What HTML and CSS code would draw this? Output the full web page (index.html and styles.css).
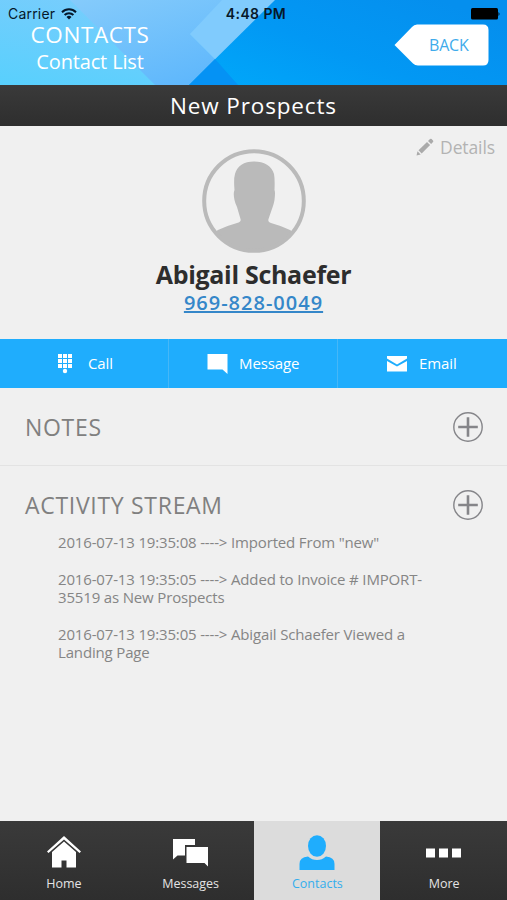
FILE: index.html
```html
<!DOCTYPE html>
<html lang="en">
<head>
    <meta charset="UTF-8">
    <meta name="viewport" content="width=device-width, initial-scale=1.0">
    <title>Contacts</title>
    <link rel="stylesheet" href="styles.css">
</head>
<body>

    <header class="header">
        <svg class="header-bg" viewBox="0 0 507 85" preserveAspectRatio="none">
            <defs>
                <linearGradient id="light" x1="0" y1="1" x2="1" y2="0">
                    <stop offset="0" stop-color="#58d0fd"/>
                    <stop offset="1" stop-color="#8ccbfc"/>
                </linearGradient>
                <linearGradient id="band" x1="0" y1="0" x2="0.6" y2="1">
                    <stop offset="0" stop-color="#85cbfb"/>
                    <stop offset="1" stop-color="#60b8fc"/>
                </linearGradient>
                <linearGradient id="deep" x1="0" y1="1" x2="1" y2="0.3">
                    <stop offset="0" stop-color="#00a9fa"/>
                    <stop offset="0.5" stop-color="#0298f4"/>
                    <stop offset="1" stop-color="#058fee"/>
                </linearGradient>
            </defs>
            <rect width="507" height="85" fill="url(#light)"/>
            <polygon points="70,0 240,0 190,34 216,60 190,85 155,85" fill="url(#band)"/>
            <polygon points="222,0 275,0 216,60 190,34" fill="#80cbfd"/>
            <polygon points="275,0 507,0 507,85 189,85" fill="url(#deep)"/>
            <polygon points="189,85 215,59 238,85" fill="#0592f4"/>
        </svg>

        <div class="status-bar">
            <div class="carrier">
                Carrier
                <svg width="16" height="12" viewBox="0 0 16 12">
                    <g fill="none" stroke="#06182a" stroke-width="2">
                        <path d="M1 4.2a10 10 0 0 1 14 0"/>
                        <path d="M3.6 7a6.2 6.2 0 0 1 8.8 0"/>
                    </g>
                    <path d="M8 11.5 5.5 8.9a3.6 3.6 0 0 1 5 0z" fill="#06182a"/>
                </svg>
            </div>
            <div class="clock">4:48 PM</div>
            <svg class="battery" width="29" height="12" viewBox="0 0 29 12">
                <rect width="27" height="11.5" rx="1.5"/>
                <path d="M27.500 4q2 2 0 4z"/>
            </svg>
        </div>

        <div class="header-row">
            <div class="heading">
                <h1>CONTACTS</h1>
                <p>Contact List</p>
            </div>
            <a href="#" class="back">
                <svg width="95" height="42" viewBox="0 0 95 42">
                    <path d="M21 .5H89q5.500 0 5.500 5.500V36q0 5.500-5.500 5.500H24q-3 0-5-2L.5 21 18 3q2-2.500 5-2.500z" fill="#fff"/>
                </svg>
                <span>BACK</span>
            </a>
        </div>
    </header>

    <div class="title-bar">New Prospects</div>

    <section class="profile">
        <a href="#" class="details">
            <svg width="18" height="18" viewBox="0 0 18 18" fill="#aaa">
                <path d="M.5 17.500 1.500 13.300 4.700 16.500z"/>
                <path d="M2.500 12.200 11 3.900 14.100 7 5.700 15.400z"/>
                <path d="M12 2.900 14 1q.8-.6 1.600.1l1.400 1.400q.7.8 0 1.600L15.100 6z"/>
            </svg>
            Details
        </a>
        <svg class="avatar" width="104" height="104" viewBox="0 0 104 104">
            <clipPath id="circle"><circle cx="52" cy="52" r="51"/></clipPath>
            <g clip-path="url(#circle)" fill="#bababa">
                <path d="M52 12.500C62 12.500 70 17 72 25Q73 30 72.500 41Q73.500 43 72.500 51Q72 54 71 57L66.500 70Q65.500 73 69 74Q80 77 88 81L104 92V104H0V92L16 81Q24 77 35 74Q39.500 73 38.500 70L35 58Q33 54 32.500 51Q31 44 32.500 41Q31.500 30 33 25C35 17 42 12.500 52 12.500Z"/>
            </g>
            <circle cx="52" cy="52" r="49.800" fill="none" stroke="#bababa" stroke-width="4"/>
        </svg>
        <h2>Abigail Schaefer</h2>
        <a href="#" class="phone">969-828-0049</a>
    </section>

    <nav class="actions">
        <a href="#" class="call">
            <svg width="14" height="20" viewBox="0 0 14 20" fill="#fff">
                <path d="M0 0h4v4H0zM5 0h4v4H5zM10 0h4v4h-4zM0 5h4v4H0zM5 5h4v4H5zM10 5h4v4h-4zM0 10h4v4H0zM5 10h4v4H5zM10 10h4v4h-4z"/>
                <circle cx="7" cy="17" r="2.200"/>
            </svg>
            <span>Call</span>
        </a>
        <a href="#" class="message">
            <svg width="21" height="20" viewBox="0 0 21 20">
                <path d="M.5 0h20v20l-5-4.500H.5z" fill="#fff"/>
            </svg>
            <span>Message</span>
        </a>
        <a href="#" class="email">
            <svg width="20" height="16" viewBox="0 0 20 16" fill="#fff">
                <path d="M0 0h20v2.500L10 8.500 0 2.500z"/>
                <path d="M0 5l10 5.500L20 5v10.500H0z"/>
            </svg>
            <span>Email</span>
        </a>
    </nav>

    <section class="panel notes">
        <h3>NOTES</h3>
        <svg width="30" height="30" viewBox="0 0 30 30" fill="none" stroke="#858589">
            <circle cx="15" cy="15" r="14.200" stroke-width="1.400"/>
            <path d="M15 5.200v19.600M5.200 15h19.600" stroke-width="2.600"/>
        </svg>
    </section>

    <section class="activity">
        <div class="panel">
            <h3>ACTIVITY STREAM</h3>
            <svg width="30" height="30" viewBox="0 0 30 30" fill="none" stroke="#858589">
                <circle cx="15" cy="15" r="14.200" stroke-width="1.400"/>
                <path d="M15 5.200v19.600M5.200 15h19.600" stroke-width="2.600"/>
            </svg>
        </div>
        <ul>
            <li>2016-07-13 19:35:08 ----&gt; Imported From "new"</li>
            <li>2016-07-13 19:35:05 ----&gt; Added to Invoice # IMPORT-<br>35519 as New Prospects</li>
            <li>2016-07-13 19:35:05 ----&gt; Abigail Schaefer Viewed a<br>Landing Page</li>
        </ul>
    </section>

    <nav class="tab-bar">
        <a href="#">
            <svg width="36" height="36" viewBox="0 0 36 36" fill="#fff">
                <path d="M18 1 35 16.500 33.500 18 18 4.500 2.500 18 1 16.500z"/>
                <path d="M18 6.500 30 17V32.500H20.500V25.500H15.500V32.500H6V17z"/>
            </svg>
            Home
        </a>
        <a href="#">
            <svg width="36" height="36" viewBox="0 0 36 36" fill="#fff">
                <path d="M0 4H22V10H12V20.500H4.500L0 24.500z"/>
                <path d="M13.500 12H35V31.500L31.500 28H13.500z"/>
            </svg>
            Messages
        </a>
        <a href="#" class="active">
            <svg width="36" height="36" viewBox="0 0 36 36" fill="#1fadfd">
                <ellipse cx="18" cy="11" rx="9" ry="10.800"/>
                <path d="M.5 35V29Q.5 22 9 21.500Q13 25 18 25T27 21.500Q35.500 22 35.500 29V35z"/>
            </svg>
            Contacts
        </a>
        <a href="#">
            <svg width="36" height="36" viewBox="0 0 36 36" fill="#fff">
                <path d="M0 13.500h9v9h-9zM13 13.500h9v9h-9zM26 13.500h9v9h-9z"/>
            </svg>
            More
        </a>
    </nav>

</body>
</html>
```
FILE: styles.css
```css
* {
    margin: 0;
    padding: 0;
    box-sizing: border-box;
}

body {
    height: 900px;
    display: flex;
    flex-direction: column;
    font-family: "Open Sans", "Noto Sans", sans-serif;
    background-color: #f0f0f0;
    color: #888;
    overflow: hidden;
}

a {
    color: inherit;
    text-decoration: none;
}

svg {
    display: block;
    flex-shrink: 0;
}

.header {
    position: relative;
    height: 85px;
    color: #fff;
}

.header-bg {
    position: absolute;
    top: 0;
    left: 0;
    width: 100%;
    height: 100%;
    z-index: -1;
}

.status-bar {
    height: 24px;
    padding: 3px 7px 0 8px;
    display: grid;
    grid-template-columns: 1fr auto 1fr;
    align-items: center;
    font-family: Inter, "Liberation Sans", sans-serif;
    font-size: 14px;
    line-height: 17px;
    color: #06182a;
}

.carrier {
    display: flex;
    align-items: center;
    gap: 6px;
    letter-spacing: 0.2px;
}

.clock {
    padding-left: 4px;
    font-weight: 600;
    letter-spacing: 0.4px;
}

.battery {
    justify-self: end;
}

.header-row {
    display: flex;
    justify-content: space-between;
    padding: 0 18px 0 30px;
}

.heading {
    width: 120px;
    text-align: center;
    white-space: nowrap;
}

.heading h1 {
    font-size: 22.5px;
    line-height: 22px;
    font-weight: 400;
    letter-spacing: 0.6px;
}

.heading p {
    font-size: 20px;
    line-height: 32px;
    letter-spacing: -0.15px;
}

.back {
    position: relative;
    width: 95px;
    height: 42px;
}

.back span {
    position: absolute;
    top: 0;
    left: 35px;
    font-size: 16px;
    line-height: 42px;
    letter-spacing: -0.2px;
    color: #3fabeb;
}

.title-bar {
    height: 41px;
    background: linear-gradient(#3a3a3a, #2e2e2e);
    color: #fff;
    font-size: 22.5px;
    line-height: 41px;
    letter-spacing: 0.85px;
    text-align: center;
}

.profile {
    position: relative;
    height: 213px;
    padding-top: 23px;
    display: flex;
    flex-direction: column;
    align-items: center;
}

.details {
    position: absolute;
    top: 9px;
    right: 12px;
    display: flex;
    align-items: center;
    gap: 6px;
    font-size: 17.5px;
    line-height: 24px;
    letter-spacing: -0.1px;
    color: #b3b3b3;
}

.profile h2 {
    margin-top: 4px;
    font-size: 25px;
    line-height: 34px;
    font-weight: 700;
    letter-spacing: -0.3px;
    color: #2d2d2d;
}

.phone {
    font-size: 20px;
    line-height: 24px;
    font-weight: 600;
    letter-spacing: 1px;
    color: #3587c9;
    text-decoration: underline;
}

.actions {
    height: 49px;
    display: grid;
    grid-template-columns: repeat(3, 1fr);
    background-color: #1fadfd;
    color: #fff;
    font-size: 15px;
    letter-spacing: -0.1px;
}

.actions a {
    display: flex;
    align-items: center;
    border-right: 1px solid #45b7f8;
}

.actions a:last-child {
    border-right: none;
}

.actions span {
    padding-bottom: 2px;
}

.call {
    gap: 16px;
    padding-left: 58px;
}

.message {
    gap: 11px;
    padding-left: 38px;
}

.email {
    gap: 12px;
    padding-left: 49px;
}

.panel {
    height: 78px;
    padding: 0 24px 0 25px;
    display: flex;
    align-items: center;
    justify-content: space-between;
}

.panel h3 {
    font-size: 23px;
    font-weight: 400;
    letter-spacing: 0.7px;
    color: #808080;
}

.notes {
    border-bottom: 1px solid #e3e3e3;
}

.activity {
    flex: 1;
}

.activity ul {
    margin-top: -11px;
    padding-left: 58px;
    list-style: none;
    font-size: 15px;
    line-height: 18.4px;
    letter-spacing: -0.16px;
    color: #858585;
}

.activity li {
    margin-bottom: 18.3px;
}

.tab-bar {
    height: 79px;
    display: grid;
    grid-template-columns: repeat(4, 1fr);
    background: linear-gradient(#3a3a3a, #2e2e2e);
    color: #e4e4e4;
    font-size: 12.5px;
}

.tab-bar a {
    display: flex;
    flex-direction: column;
    align-items: center;
    padding: 14px 0 0 1px;
    line-height: 25px;
}

.tab-bar .active {
    background-color: #dcdcdc;
    color: #35aeed;
}
```
